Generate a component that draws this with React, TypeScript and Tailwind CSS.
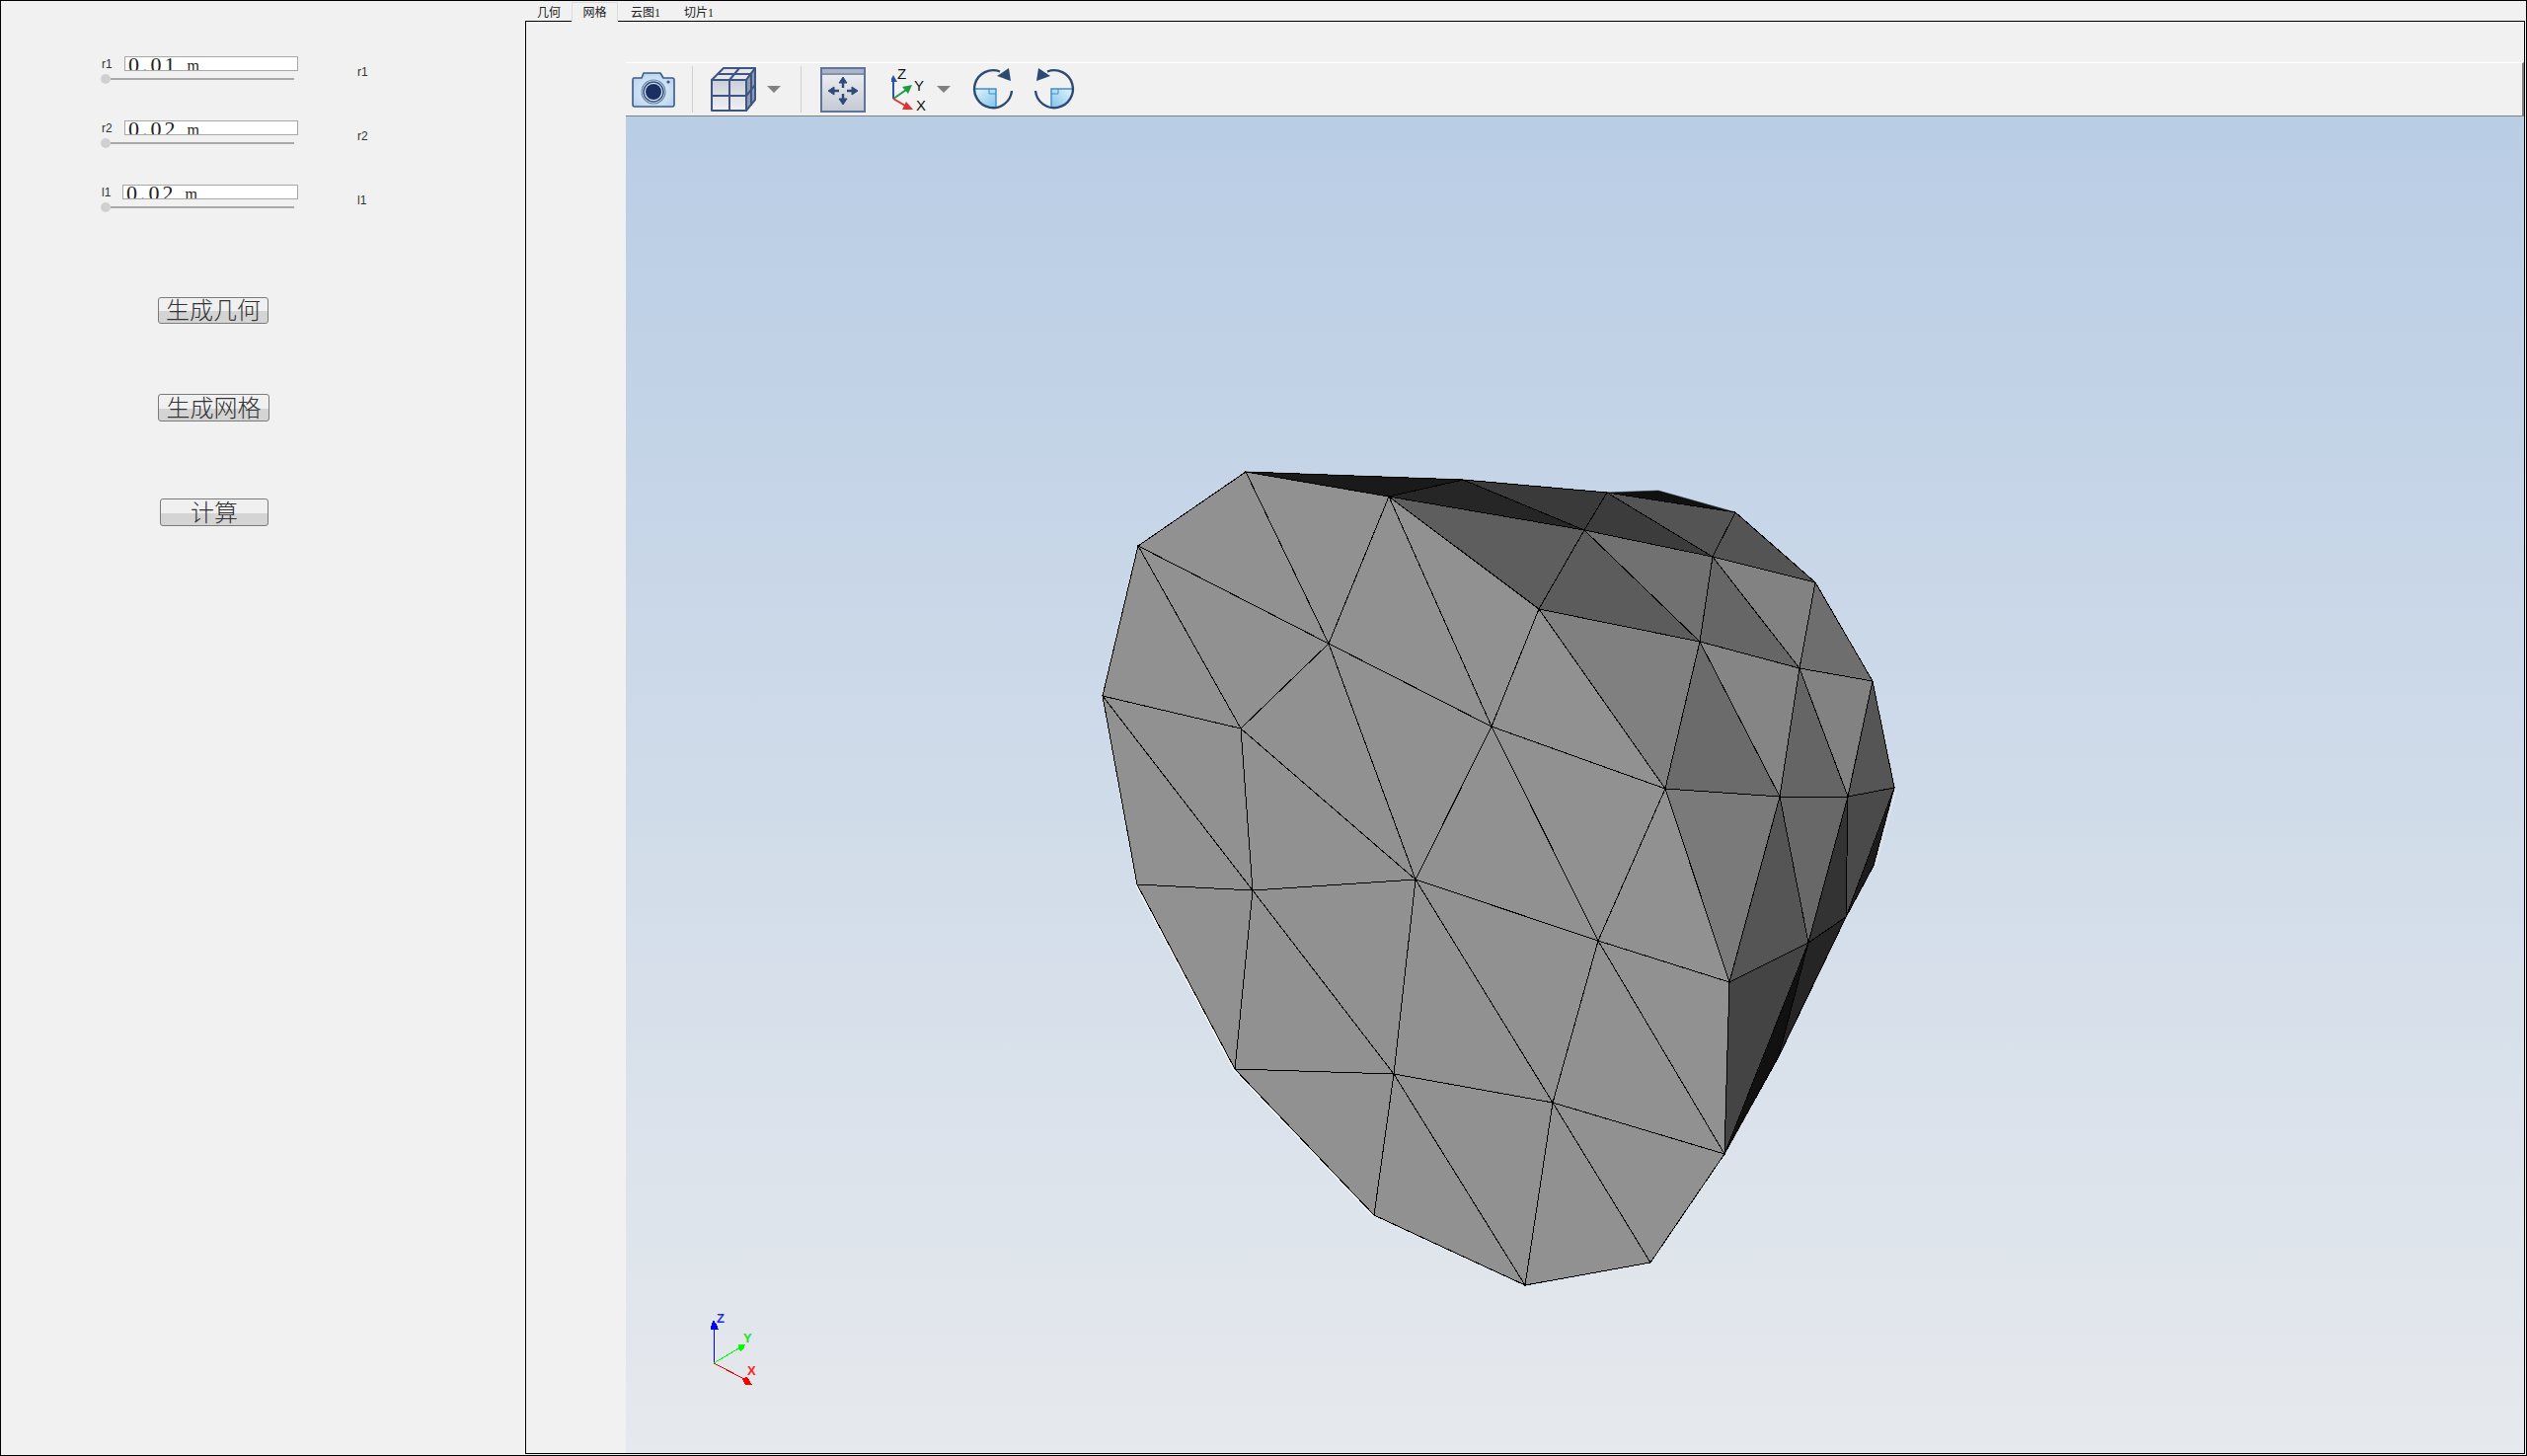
const P: Record<string, [number, number]> = {
  A: [1262, 478], B: [1153, 553], C: [1117, 705], D: [1257, 738], E: [1346, 652], F: [1407, 503],
  G: [1482, 486], H: [1605, 537], I: [1559, 617], J: [1511, 736], K: [1628, 499], M: [1735, 564],
  N: [1758, 519], O: [1839, 590], Q: [1823, 677], R: [1897, 690], Pp: [1722, 650], S: [1919, 798],
  T: [1872, 807], U: [1803, 807], V: [1687, 799], W: [1832, 955], X: [1870, 929], Y: [1752, 995],
  Z: [1747, 1169], AA: [1619, 953], BB: [1152, 896], CC: [1269, 902], DD: [1434, 891], EE: [1251, 1083],
  FF: [1412, 1088], GG: [1573, 1117], HH: [1392, 1231], II: [1545, 1302], JJ: [1672, 1279],
  S1: [1802, 1070], S2: [1898, 877], S3: [1680, 497],
};

const LIGHT = "#919191";

// [vertices, fill, draw edges]
const FACES: [string, string, boolean?][] = [
  ["S1 Z W", "#111111", false],
  ["W X S1", "#252525", false],
  ["S S2 X", "#1c1c1c", false],
  ["K S3 N", "#111111", false],
  ["A B E", LIGHT], ["A E F", LIGHT], ["B C D", LIGHT], ["B D E", LIGHT], ["C D CC", LIGHT],
  ["C CC BB", LIGHT], ["D E DD", LIGHT], ["D CC DD", LIGHT], ["E F J", LIGHT], ["E J DD", LIGHT],
  ["F I J", LIGHT], ["DD J AA", LIGHT], ["J V AA", LIGHT], ["J I V", LIGHT], ["CC DD FF", LIGHT],
  ["CC EE FF", LIGHT], ["CC BB EE", LIGHT], ["EE FF HH", LIGHT], ["FF HH II", LIGHT], ["FF DD GG", LIGHT],
  ["DD GG AA", LIGHT], ["FF GG II", LIGHT], ["GG II JJ", LIGHT], ["GG JJ Z", LIGHT], ["GG AA Z", LIGHT],
  ["AA Y Z", LIGHT], ["AA V Y", LIGHT],
  ["A F G", "#1a1a1a"], ["F G H", "#262626"], ["G K H", "#3a3a3a"], ["K H M", "#3c3c3c"], ["K N M", "#545454"],
  ["F H I", "#5e5e5e"], ["H I Pp", "#5c5c5c"], ["H M Pp", "#717171"], ["M N O", "#545454"], ["M O Q", "#828282"],
  ["M Q Pp", "#666666"], ["Pp Q U", "#858585"], ["Pp V U", "#6b6b6b"], ["I V Pp", "#808080"], ["O Q R", "#6e6e6e"],
  ["Q R T", "#828282"], ["Q U T", "#656565"], ["R S T", "#555555"], ["V U Y", "#7a7a7a"], ["U Y W", "#555555"],
  ["U T W", "#686868"], ["T W X", "#333333"], ["T S X", "#4a4a4a"], ["Y W Z", "#444444"],
];

const pts = (names: string) =>
  names
    .split(" ")
    .map((n) => P[n].join(","))
    .join(" ");

function Mesh() {
  return (
    <svg viewBox="634 118 1923 1354" width={1923} height={1354} className="block">
      <polyline points={pts("BB EE HH")} fill="none" stroke="#ffffff" transform="translate(-1 1)" />
      <polyline points="1919,800 1898,878" fill="none" stroke="#e8e8e8" transform="translate(2 0)" />
      {FACES.map(([names, fill]) => (
        <polygon key={names} points={pts(names)} fill={fill} stroke={fill} strokeWidth={0.5} />
      ))}
      {FACES.filter((f) => f[2] !== false).map(([names]) => (
        <polygon key={names} points={pts(names)} fill="none" stroke="#000000" strokeWidth={1} shapeRendering="crispEdges" />
      ))}
      <polyline points={pts("S1 W")} fill="none" stroke="#000000" shapeRendering="crispEdges" />
      <polyline points={pts("Z S1 X")} fill="none" stroke="#000000" shapeRendering="crispEdges" />
      <polyline points={pts("S S2 X")} fill="none" stroke="#000000" shapeRendering="crispEdges" />

      {/* axis triad */}
      <g shapeRendering="crispEdges">
        <line x1={723} y1={1381} x2={723} y2={1345} stroke="#0000ff" />
        <line x1={723} y1={1381} x2={750} y2={1365} stroke="#00ff00" />
        <line x1={723} y1={1381} x2={754} y2={1397} stroke="#ff0000" />
        <polygon points="723,1337 727,1344 728,1347 720,1347 720,1344" fill="#0000ff" />
        <polygon points="755,1362 753,1367 750,1369 748,1367 748,1362" fill="#00ff00" />
        <polygon points="752,1397 756,1395 759,1398 762,1403 755,1403" fill="#ff0000" />
      </g>
      <text x={726} y={1340} fontSize={13} fontWeight={700} fill="#2030e0" fontFamily="'Liberation Sans', sans-serif">Z</text>
      <text x={753} y={1360} fontSize={13} fontWeight={700} fill="#20e020" fontFamily="'Liberation Sans', sans-serif">Y</text>
      <text x={757} y={1393} fontSize={13} fontWeight={700} fill="#ff2020" fontFamily="'Liberation Sans', sans-serif">X</text>
    </svg>
  );
}

function CameraIcon() {
  return (
    <svg width={46} height={38} viewBox="0 0 46 38" className="block">
      <defs>
        <radialGradient id="camFill" cx="50%" cy="55%" r="60%">
          <stop offset="0%" stopColor="#eef6fd" />
          <stop offset="100%" stopColor="#b8d4ee" />
        </radialGradient>
      </defs>
      <path
        d="M3,7 H11 L13,2 H30 L33,7 H42 Q44,7 44,9 V34 Q44,36 42,36 H4 Q2,36 2,34 V9 Q2,7 3,7 Z"
        fill="url(#camFill)"
        stroke="#3d5a88"
        strokeWidth={1.6}
        strokeLinejoin="round"
      />
      <circle cx={23} cy={21} r={12} fill="#d9e8f6" stroke="#6c86ab" strokeWidth={1.2} />
      <circle cx={23} cy={21} r={10} fill="none" stroke="#34507f" strokeWidth={1.5} />
      <circle cx={23} cy={21} r={8} fill="#1b2f63" />
      <circle cx={38} cy={11} r={1.6} fill="#3d5a88" />
    </svg>
  );
}

function CubeIcon() {
  return (
    <svg width={46} height={46} viewBox="0 0 46 46" className="block">
      <defs>
        <linearGradient id="cubeFace" x1="0" y1="0" x2="0" y2="1">
          <stop offset="0%" stopColor="#c9ced8" />
          <stop offset="100%" stopColor="#f0f1f4" />
        </linearGradient>
      </defs>
      <g stroke="#3d5580" strokeWidth={2} strokeLinejoin="round" transform="translate(1 1)">
        <polygon points="0,12 12,0 44,0 35,12" fill="#e4e6ec" />
        <polygon points="35,12 44,0 44,32 35,43" fill="#8d9ab2" />
        <rect x={0} y={12} width={35} height={31} fill="url(#cubeFace)" />
        <path d="M18,12 V43 M0,28 H35 M18,12 L28,0 M6,6 H40 M40,6 V38 M35,28 L44,17" fill="none" />
      </g>
    </svg>
  );
}

function FitIcon() {
  return (
    <svg width={46} height={46} viewBox="0 0 46 46" className="block">
      <defs>
        <linearGradient id="fitFill" x1="0" y1="0" x2="0" y2="1">
          <stop offset="0%" stopColor="#f2f2f5" />
          <stop offset="100%" stopColor="#c5c9d3" />
        </linearGradient>
      </defs>
      <rect x={1} y={1} width={44} height={44} fill="url(#fitFill)" stroke="#5f7499" strokeWidth={2} />
      <rect x={2} y={2} width={42} height={4} fill="#aab4c6" />
      <line x1={2} y1={7} x2={44} y2={7} stroke="#5f7499" strokeWidth={1.5} />
      <g fill="#2d4a7a" stroke="#2d4a7a" strokeWidth={1}>
        <path d="M23,10 L27,16 H19 Z M23,38 L27,32 H19 Z M8,24 L14,20 V28 Z M38,24 L32,20 V28 Z" />
        <path d="M23,16 V21 M23,27 V32 M14,24 H19 M27,24 H32" fill="none" strokeWidth={2.4} />
      </g>
    </svg>
  );
}

function AxesIcon() {
  return (
    <svg width={40} height={46} viewBox="0 0 40 46" className="block">
      <text x={6} y={12} fontSize={15} fill="#111111" fontFamily="'Liberation Sans', sans-serif">Z</text>
      <text x={23} y={24} fontSize={15} fill="#111111" fontFamily="'Liberation Sans', sans-serif">Y</text>
      <text x={25} y={44} fontSize={15} fill="#111111" fontFamily="'Liberation Sans', sans-serif">X</text>
      <line x1={2} y1={32} x2={2} y2={14} stroke="#2b55a8" strokeWidth={2} />
      <polygon points="2,8 6,15 -2,15" fill="#2b55a8" />
      <line x1={2} y1={32} x2={15} y2={23} stroke="#1f9a4d" strokeWidth={2} />
      <polygon points="21,18 17,27 11,20" fill="#1f9a4d" />
      <line x1={2} y1={32} x2={14} y2={39} stroke="#e03030" strokeWidth={2} />
      <polygon points="22,43 11,43 15,35" fill="#e03030" />
    </svg>
  );
}

function RotateIcon({ mirrored, id }: { mirrored?: boolean; id: string }) {
  return (
    <svg width={44} height={44} viewBox="0 0 44 44" className="block">
      <defs>
        <linearGradient id={id} x1="0" y1="0" x2="1" y2="1">
          <stop offset="0%" stopColor="#e6f4fc" />
          <stop offset="100%" stopColor="#7fc4ea" />
        </linearGradient>
      </defs>
      <g transform={mirrored ? "translate(44 0) scale(-1 1)" : undefined}>
        <path d="M3,22 H25 V41 A19,19 0 0 1 3,22 Z" fill={`url(#${id})`} />
        <path d="M3,22 H25 V41" fill="none" stroke="#3f8fc6" strokeWidth={1.4} />
        <path d="M18,22 V27 H25" fill="none" stroke="#3f8fc6" strokeWidth={1} />
        <path d="M41,24 A19,19 0 1 1 29,4.5" fill="none" stroke="#2d4a72" strokeWidth={2.4} />
        <polygon points="38,1 40,14 26,9" fill="#2d4a72" />
      </g>
    </svg>
  );
}

function Caret() {
  return <div className="h-0 w-0 border-x-[7px] border-t-[7px] border-x-transparent border-t-[#808080]" />;
}

function Sep() {
  return <div className="h-[47px] w-px bg-[#cfcfcf]" />;
}

function ParamRow({ name, value, inputClass }: { name: string; value: string; inputClass: string }) {
  return (
    <div className="flex h-[65px] items-start pl-[101px]">
      <div className="w-[200px]">
        <div className="flex h-[15px] items-center">
          <span className="pl-px text-[12px] leading-none text-[#333]">{name}</span>
          <div className={`${inputClass} ml-auto flex h-[15px] overflow-hidden border border-[#a8a8a8] bg-white`}>
            <span className="-mt-[3px] ml-[3px] font-['Liberation_Serif',serif] text-[22px] leading-[22px] tracking-[3px] text-[#222]">
              {value}
            </span>
            <span className="ml-[9px] font-['Liberation_Serif',serif] text-[16px] leading-[17px] text-[#222]">m</span>
          </div>
        </div>
        <div className="mt-[3px] flex h-[10px] items-center">
          <div className="h-[10px] w-[10px] rounded-full bg-[#d0d0d0]" />
          <div className="h-[2px] w-[186px] bg-[#a8a8a8]" />
        </div>
      </div>
      <span className="ml-[60px] mt-[10px] text-[12px] leading-[12px] text-[#333]">{name}</span>
    </div>
  );
}

function Btn({ children, className }: { children: string; className: string }) {
  return (
    <button
      className={`${className} flex items-center justify-center rounded-[3px] border border-[#7a7a7a] bg-[linear-gradient(#f0f0f0_0_52%,#d4d4d4_52%_100%)] pt-px font-['Liberation_Serif','Noto_Sans_CJK_SC',serif] text-[24px] font-light leading-none text-[#333]`}
    >
      {children}
    </button>
  );
}

export default function App() {
  return (
    <div className="flex h-screen w-screen overflow-hidden border border-black bg-[#f1f1f1] font-['Liberation_Sans','Noto_Sans_CJK_SC',sans-serif]">
      {/* Parametros */}
      <div className="w-[531px] shrink-0 pt-[56px]">
        <ParamRow name="r1" value="0.01" inputClass="w-[176px]" />
        <ParamRow name="r2" value="0.02" inputClass="w-[176px]" />
        <ParamRow name="l1" value="0.02" inputClass="w-[178px]" />
        <Btn className="ml-[159px] mt-[49px] h-[27px] w-[112px]">生成几何</Btn>
        <Btn className="ml-[159px] mt-[71px] h-[28px] w-[113px]">生成网格</Btn>
        <Btn className="ml-[161px] mt-[78px] h-[28px] w-[110px]">计算</Btn>
      </div>

      {/* Pestañas */}
      <div className="flex min-w-0 flex-1 flex-col">
        <div className="flex h-[20px] items-end pl-[12px] font-['Liberation_Serif','Noto_Sans_CJK_SC',serif] text-[12px] text-[#222]">
          <div className="flex h-[17px] w-[35px] items-center">几何</div>
          <div className="relative z-10 -mb-px flex h-[20px] w-[47px] items-center justify-center border border-b-0 border-[#dcdcdc] bg-[#f1f1f1]">
            网格
          </div>
          <div className="ml-[13px] flex h-[17px] w-[54px] items-center">云图1</div>
          <div className="flex h-[17px] items-center">切片1</div>
        </div>

        <div className="mb-px mr-px flex min-h-0 flex-1 border border-black">
          <div className="w-[101px] shrink-0" />
          <div className="flex min-w-0 flex-1 flex-col pt-[41px]">
            {/* Toolbar */}
            <div className="flex h-[55px] shrink-0 items-center border-r-2 border-t border-b border-r-[#808080] border-t-white border-b-[#808080] bg-[#f1f1f1] pl-[5px]">
              <CameraIcon />
              <div className="ml-[16px]"><Sep /></div>
              <div className="ml-[18px]"><CubeIcon /></div>
              <div className="ml-[11px]"><Caret /></div>
              <div className="ml-[20px]"><Sep /></div>
              <div className="ml-[19px]"><FitIcon /></div>
              <div className="ml-[26px]"><AxesIcon /></div>
              <div className="ml-[6px]"><Caret /></div>
              <div className="ml-[21px] -mt-[2px]"><RotateIcon id="rotA" /></div>
              <div className="ml-[18px] -mt-[2px]"><RotateIcon id="rotB" mirrored /></div>
            </div>
            {/* Vista 3D */}
            <div className="min-h-0 flex-1 overflow-hidden bg-[linear-gradient(#b9cde5,#e6e9ed)]">
              <Mesh />
            </div>
          </div>
        </div>
      </div>
    </div>
  );
}
